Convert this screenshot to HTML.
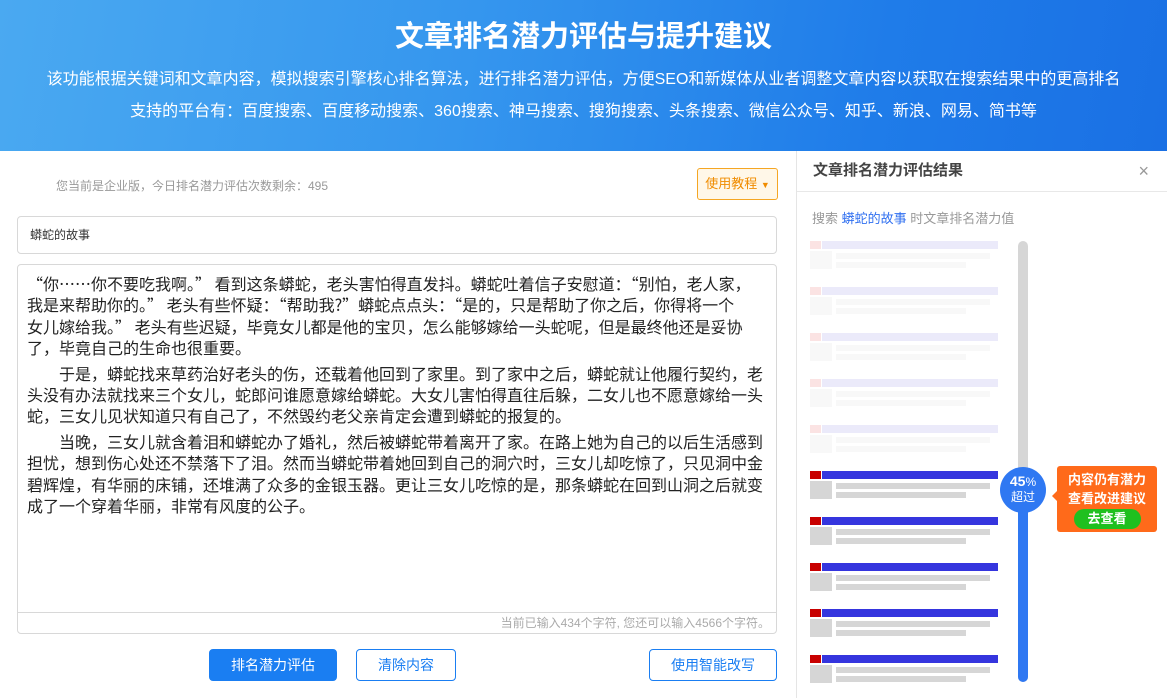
<!DOCTYPE html>
<html><head><meta charset="utf-8"><style>
*{margin:0;padding:0;box-sizing:border-box}
body{width:1167px;height:698px;overflow:hidden;background:#fff;font-family:"Liberation Sans","Noto Sans CJK SC",sans-serif;position:relative}
.hdr{position:absolute;left:0;top:0;width:1167px;height:151px;background:linear-gradient(100deg,#4aa9f1 0%,#3596ee 40%,#1f7ce9 75%,#1a70e4 100%);color:#fff;text-align:center}
.hdr h1{position:absolute;top:13px;width:100%;font-size:29px;font-weight:bold;letter-spacing:0px}
.hdr .s1{position:absolute;top:65px;width:100%;font-size:16px}
.hdr .s2{position:absolute;top:97px;width:100%;font-size:16px}
.abs{position:absolute}
.tip{left:56px;top:177px;font-size:12px;color:#999}
.btn-tut{left:697px;top:168px;width:81px;height:32px;border:1px solid #f5a623;background:#fff7e8;border-radius:3px;color:#f08c00;font-size:13px;line-height:30px;text-align:center}
.kw{left:17px;top:216px;width:760px;height:38px;border:1px solid #d8d8d8;border-radius:4px;font-size:12px;color:#333;line-height:36px;padding-left:12px}
.ta{left:17px;top:264px;width:760px;height:370px;border:1px solid #d8d8d8;border-radius:4px}
.txt{position:absolute;left:9px;top:8px;font-size:16px;line-height:21.4px;color:#222;white-space:nowrap;font-family:"Noto Sans CJK SC","Liberation Sans",sans-serif}
.txt .p{margin-bottom:4px}
.cnt{position:absolute;left:0;top:347px;width:758px;height:21px;border-top:1px solid #d8d8d8;font-size:12px;color:#aaa;text-align:right;padding-right:6px;line-height:20px}
.b{position:absolute;top:649px;height:32px;border-radius:4px;font-size:14px;line-height:30px;text-align:center}
.rp{left:796px;top:151px;width:371px;height:547px;border-left:1px solid #e5e5e5}
.rh{position:absolute;left:0;top:0;width:370px;height:41px;border-bottom:1px solid #e8e8e8;font-size:15px;font-weight:bold;color:#444;line-height:40px;padding-left:16px}
.sub{position:absolute;left:15px;top:57px;font-size:13px;color:#999}
.it{position:absolute;left:13px;width:188px;height:30px}
.it .r{position:absolute;left:0;top:0;width:11px;height:8px}
.it .bl{position:absolute;left:12px;top:0;width:176px;height:8px}
.it .th{position:absolute;left:0;top:10px;width:22px;height:18px}
.it .l1{position:absolute;left:26px;top:12px;width:154px;height:6px}
.it .l2{position:absolute;left:26px;top:21px;width:130px;height:6px}
.f .r{background:#fbe3e3}.f .bl{background:#ebeafa}.f .th,.f .l1,.f .l2{background:#f8f8f8}
.a .r{background:#c80000}.a .bl{background:#3535de}.a .th,.a .l1,.a .l2{background:#d6d6d6}
</style></head><body>
<div class="hdr">
<h1>文章排名潜力评估与提升建议</h1>
<div class="s1">该功能根据关键词和文章内容，模拟搜索引擎核心排名算法，进行排名潜力评估，方便SEO和新媒体从业者调整文章内容以获取在搜索结果中的更高排名</div>
<div class="s2">支持的平台有：百度搜索、百度移动搜索、360搜索、神马搜索、搜狗搜索、头条搜索、微信公众号、知乎、新浪、网易、简书等</div>
</div>
<div class="abs tip">您当前是企业版，今日排名潜力评估次数剩余：495</div>
<div class="abs btn-tut">使用教程 <span style="font-size:9px">▼</span></div>
<div class="abs kw">蟒蛇的故事</div>
<div class="abs ta">
<div class="txt">
<div class="p">“你……你不要吃我啊。” 看到这条蟒蛇，老头害怕得直发抖。蟒蛇吐着信子安慰道：“别怕，老人家，<br>我是来帮助你的。” 老头有些怀疑：“帮助我?”蟒蛇点点头：“是的，只是帮助了你之后，你得将一个<br>女儿嫁给我。” 老头有些迟疑，毕竟女儿都是他的宝贝，怎么能够嫁给一头蛇呢，但是最终他还是妥协<br>了，毕竟自己的生命也很重要。</div>
<div class="p">　　于是，蟒蛇找来草药治好老头的伤，还载着他回到了家里。到了家中之后，蟒蛇就让他履行契约，老<br>头没有办法就找来三个女儿，蛇郎问谁愿意嫁给蟒蛇。大女儿害怕得直往后躲，二女儿也不愿意嫁给一头<br>蛇，三女儿见状知道只有自己了，不然毁约老父亲肯定会遭到蟒蛇的报复的。</div>
<div class="p">　　当晚，三女儿就含着泪和蟒蛇办了婚礼，然后被蟒蛇带着离开了家。在路上她为自己的以后生活感到<br>担忧，想到伤心处还不禁落下了泪。然而当蟒蛇带着她回到自己的洞穴时，三女儿却吃惊了，只见洞中金<br>碧辉煌，有华丽的床铺，还堆满了众多的金银玉器。更让三女儿吃惊的是，那条蟒蛇在回到山洞之后就变<br>成了一个穿着华丽，非常有风度的公子。</div>
</div>
<div class="cnt">当前已输入434个字符, 您还可以输入4566个字符。</div>
</div>
<div class="b" style="left:209px;width:128px;background:#1a7ef2;color:#fff;border:1px solid #1a7ef2">排名潜力评估</div>
<div class="b" style="left:356px;width:100px;border:1px solid #1a7ef2;color:#1a7ef2">清除内容</div>
<div class="b" style="left:649px;width:128px;border:1px solid #1a7ef2;color:#1a7ef2">使用智能改写</div>

<div class="abs rp">
<div class="rh">文章排名潜力评估结果<span style="position:absolute;right:18px;top:0;font-weight:normal;color:#999;font-size:18px">×</span></div>
<div class="sub">搜索 <span style="color:#2f6ff0">蟒蛇的故事</span> 时文章排名潜力值</div>
<div class="it f" style="top:90px"><div class="r"></div><div class="bl"></div><div class="th"></div><div class="l1"></div><div class="l2"></div></div>
<div class="it f" style="top:136px"><div class="r"></div><div class="bl"></div><div class="th"></div><div class="l1"></div><div class="l2"></div></div>
<div class="it f" style="top:182px"><div class="r"></div><div class="bl"></div><div class="th"></div><div class="l1"></div><div class="l2"></div></div>
<div class="it f" style="top:228px"><div class="r"></div><div class="bl"></div><div class="th"></div><div class="l1"></div><div class="l2"></div></div>
<div class="it f" style="top:274px"><div class="r"></div><div class="bl"></div><div class="th"></div><div class="l1"></div><div class="l2"></div></div>
<div class="it a" style="top:320px"><div class="r"></div><div class="bl"></div><div class="th"></div><div class="l1"></div><div class="l2"></div></div>
<div class="it a" style="top:366px"><div class="r"></div><div class="bl"></div><div class="th"></div><div class="l1"></div><div class="l2"></div></div>
<div class="it a" style="top:412px"><div class="r"></div><div class="bl"></div><div class="th"></div><div class="l1"></div><div class="l2"></div></div>
<div class="it a" style="top:458px"><div class="r"></div><div class="bl"></div><div class="th"></div><div class="l1"></div><div class="l2"></div></div>
<div class="it a" style="top:504px"><div class="r"></div><div class="bl"></div><div class="th"></div><div class="l1"></div><div class="l2"></div></div>
<div style="position:absolute;left:221px;top:90px;width:10px;height:441px;border-radius:5px;background:#d6d6d6"></div>
<div style="position:absolute;left:221px;top:320px;width:10px;height:211px;border-radius:5px;background:#2f78f2"></div>
<div style="position:absolute;left:203px;top:316px;width:46px;height:46px;border-radius:50%;background:#2f78f2;color:#fff;text-align:center;font-size:12px;line-height:15px;padding-top:7px"><b style="font-size:14px">45</b>%<br>超过</div>
<div style="position:absolute;left:260px;top:315px;width:100px;height:66px;background:#ff6a1a;border-radius:3px;color:#fff;text-align:center;font-size:13px;font-weight:bold;line-height:19px;padding-top:4px">内容仍有潜力<br>查看改进建议<div style="margin:1px auto 0;width:67px;height:20px;border-radius:10px;background:#1fc01f;line-height:20px">去查看</div></div>
<div style="position:absolute;left:255px;top:340px;width:0;height:0;border-top:5px solid transparent;border-bottom:5px solid transparent;border-right:5px solid #ff6a1a"></div>
</div>
</body></html>
